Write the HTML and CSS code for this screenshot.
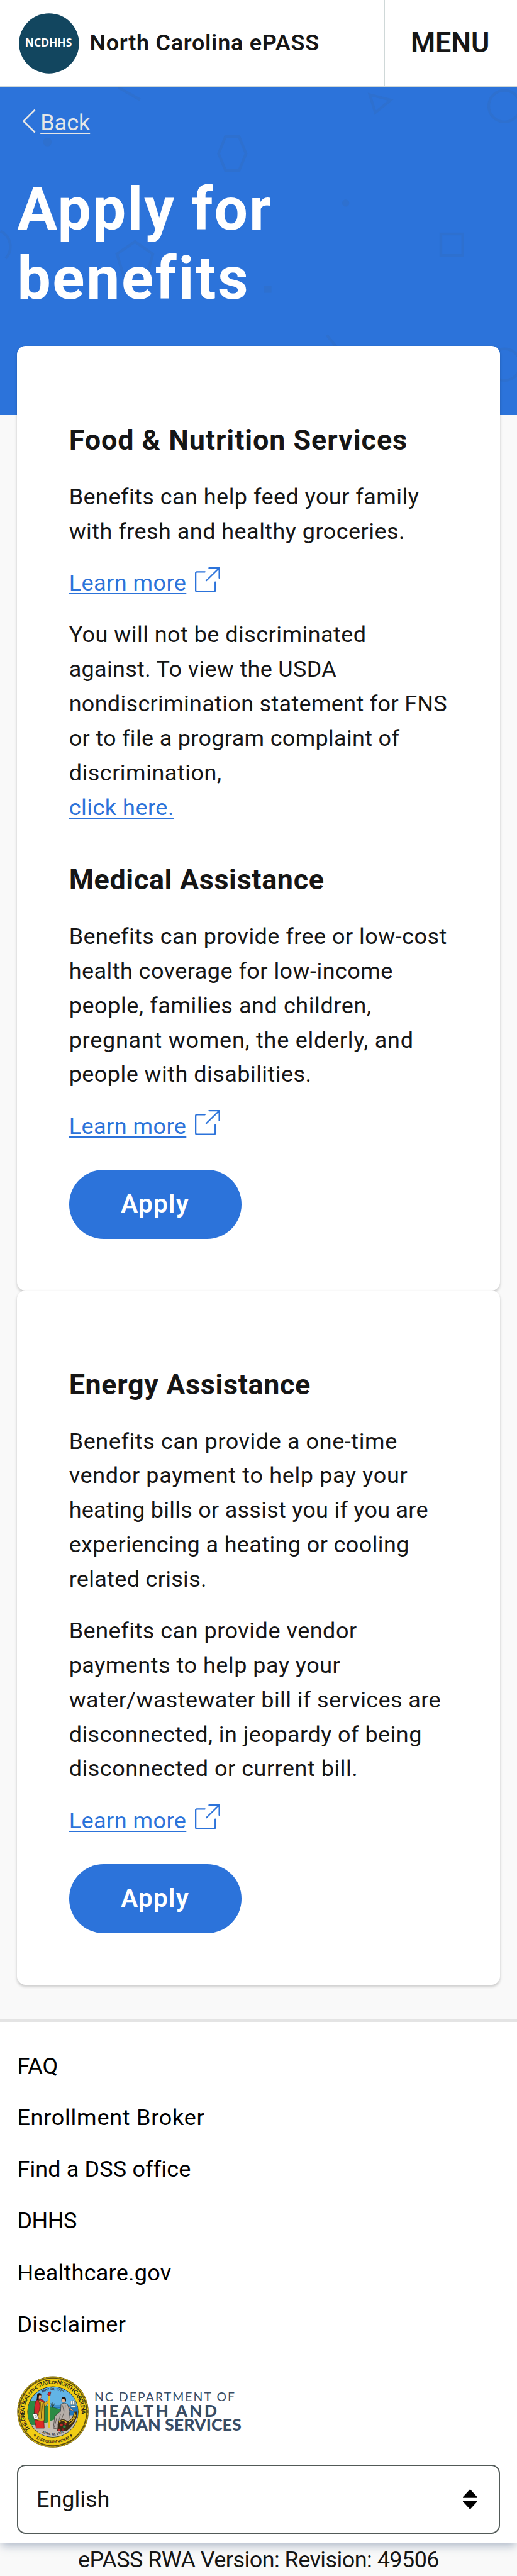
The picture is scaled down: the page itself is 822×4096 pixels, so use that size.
FILE: index.html
```html
<!DOCTYPE html>
<html lang="en">
<head>
<meta charset="utf-8">
<title>Apply for benefits - North Carolina ePASS</title>
<link rel="stylesheet" href="styles.css">
</head>
<body>
<svg class="defs" width="0" height="0" aria-hidden="true">
  <symbol id="external" viewBox="0 0 17.5 17.5">
    <path d="M6.9 3.2H1.3Q.5 3.2 .5 4V16Q.5 16.9 1.3 16.9H13.3Q14.1 16.9 14.1 16V10.3M9.8 .5H16.9V7.4M16.9 .5L7.9 9.3" fill="none" stroke="#2c73da" stroke-linecap="round"/>
  </symbol>
</svg>

<header class="topbar">
  <a class="brand">
    <svg class="brand-logo" viewBox="0 0 42 42"><circle cx="21" cy="21" r="20.9" fill="#12465f"/><text x="20.6" y="23.4" text-anchor="middle" textLength="32.6" lengthAdjust="spacingAndGlyphs">NCDHHS</text></svg>
    <span class="brand-name">North Carolina ePASS</span>
  </a>
  <button class="menu">MENU</button>
</header>

<section class="hero">
  <svg class="hero-shapes" viewBox="0 0 360 228" fill="none" stroke="#2e70cf" stroke-width="1.9">
    <path d="M82.5 0L97.5 8.5"/>
    <path d="M257.5 5L272 8.7L261.3 17.5Z"/>
    <circle cx="351.3" cy="13" r="11"/>
    <circle cx="33" cy="38" r="3" fill="#2e70cf" stroke="none"/>
    <path d="M157 34.2H166.5L171.3 46L166.5 57.8H157L152.2 46Z"/>
    <circle cx="240.7" cy="80.5" r="2.5" fill="#2e70cf" stroke="none"/>
    <path d="M.3 100A12 12 0 0 1 4 119"/>
    <path d="M94 107.3L106.4 116L102.3 131H86L81.4 116Z"/>
    <rect x="307" y="102" width="15.2" height="15"/>
    <rect x="184" y="138" width="5" height="5" fill="#2e70cf" stroke="none"/>
    <path d="M227.6 172.5L236 183"/>
    <circle cx="351.3" cy="193" r="11"/>
  </svg>
  <div class="hero-body">
    <a class="back"><svg class="chevron" viewBox="0 0 10 17"><path d="M9 .7L1.1 8.6L9 16.4" fill="none" stroke="#e6e6e6" stroke-width="1.15"/></svg><span class="back-label">Back</span></a>
    <h1 class="title"><span class="ls-20">Apply for</span><br><span class="ls-24">benefits</span></h1>
  </div>
</section>

<main class="cards">
  <article class="card">
    <h2 class="heading ls-20">Food &amp; Nutrition Services</h2>
    <p class="para"><span class="ls-12">Benefits can help feed your family</span><br><span class="ls-12">with fresh and healthy groceries.</span></p>
    <p class="para learn"><a class="link ls-12">Learn more</a><svg class="ext"><use href="#external"/></svg></p>
    <p class="para"><span class="ls-12">You will not be discriminated</span><br><span class="ls-8">against. To view the USDA</span><br><span class="ls-8">nondiscrimination statement for FNS</span><br><span class="ls-8">or to file a program complaint of</span><br><span class="ls-14">discrimination,</span><br><a class="link ls-14">click here.</a></p>
    <h2 class="heading second ls-14">Medical Assistance</h2>
    <p class="para"><span class="ls-12">Benefits can provide free or low-cost</span><br><span class="ls-12">health coverage for low-income</span><br><span class="ls-16">people, families and children,</span><br><span class="ls-20">pregnant women, the elderly, and</span><br><span class="ls-12">people with disabilities.</span></p>
    <p class="para learn"><a class="link ls-12">Learn more</a><svg class="ext"><use href="#external"/></svg></p>
    <button class="apply">Apply</button>
  </article>
  <article class="card">
    <h2 class="heading ls-14">Energy Assistance</h2>
    <p class="para"><span class="ls-16">Benefits can provide a one-time</span><br><span class="ls-18">vendor payment to help pay your</span><br><span class="ls-6">heating bills or assist you if you are</span><br><span class="ls-10">experiencing a heating or cooling</span><br><span class="ls-8">related crisis.</span></p>
    <p class="para"><span class="ls-14">Benefits can provide vendor</span><br><span class="ls-14">payments to help pay your</span><br><span class="ls-10">water/wastewater bill if services are</span><br><span class="ls-12">disconnected, in jeopardy of being</span><br><span class="ls-14">disconnected or current bill.</span></p>
    <p class="para learn"><a class="link ls-12">Learn more</a><svg class="ext"><use href="#external"/></svg></p>
    <button class="apply">Apply</button>
  </article>
</main>

<footer class="footer">
  <nav class="links">
    <a>FAQ</a>
    <a class="ls-20">Enrollment Broker</a>
    <a class="ls-4">Find a DSS office</a>
    <a class="tight">DHHS</a>
    <a class="ls-6">Healthcare.gov</a>
    <a class="ls-8">Disclaimer</a>
  </nav>
  <svg class="dept" viewBox="0 0 471 150">
    <defs>
      <path id="ring" d="M27.6 112A59.5 59.5 0 1 1 122.4 112"/>
      <path id="innerTop" d="M31 65A45 45 0 0 1 119 65"/>
      <path id="innerBottom" d="M36 105A49.5 49.5 0 0 0 114 105"/>
      <path id="motto" d="M22 113.5A66 66 0 0 0 128 113.5"/>
      <clipPath id="scene"><circle cx="75" cy="75" r="52.5"/></clipPath>
    </defs>
    <circle cx="75" cy="75" r="74.5" fill="#5a4c12"/>
    <circle cx="75" cy="75" r="72.8" fill="none" stroke="#dfc01c" stroke-width="2.6" stroke-dasharray="1.6 1.1"/>
    <circle cx="75" cy="75" r="70" fill="#f1cd14" stroke="#4a3f12" stroke-width=".8"/>
    <circle cx="75" cy="75" r="53.4" fill="#23241c"/>
    <g clip-path="url(#scene)">
      <rect x="20" y="20" width="110" height="110" fill="#62b4e6"/>
      <rect x="68" y="61" width="62" height="25" fill="#2579bd"/>
      <path d="M70 64H125M74 68H100M76 71H90" stroke="#62b4e6" stroke-width=".8"/>
      <path d="M20 55Q40 46 52 60Q75 65 91 70Q88 95 55 112H20Z" fill="#2c8a45" stroke="#174a26" stroke-width=".7"/>
      <path d="M20 103Q50 104 78 91L95 82H130V130H20Z" fill="#c4bdb4"/>
      <path d="M112 62H124L121 66H114ZM112 52h3v8h-3zM116 51h3v9h-3zM120 53h3v7h-3z" fill="#f4f4ee" stroke="#33403f" stroke-width=".6"/>
      <path d="M37 92L40 109H57L56 91Z" fill="#dd2926" stroke="#43100f" stroke-width=".8"/>
      <path d="M40 51Q36 60 36 83L43 92L52 84L57 52Q49 46 40 51Z" fill="#d3282b" stroke="#43100f" stroke-width=".8"/>
      <path d="M45 50L57 56V93Q48 96 38 90Q47 78 48 62Z" fill="#dcae26" stroke="#3b2e0b" stroke-width=".9"/>
      <path d="M56 57L66 50L68 53L58 65Z" fill="#dcae26" stroke="#3b2e0b" stroke-width=".7"/>
      <path d="M49 55L51 87M54 57L50 91M45 80L42 91" stroke="#3b2e0b" stroke-width=".8" fill="none"/>
      <ellipse cx="47" cy="42" rx="4" ry="5.3" fill="#e8b592" stroke="#2a1510" stroke-width=".5"/>
      <path d="M42 43Q41 34 49 36L51 40L46 40L45 50H41Z" fill="#201612"/>
      <path d="M33 79L41 78L46 89L36 91Z" fill="#fff" stroke="#222" stroke-width=".8"/>
      <path d="M36 83L41 82M37 86L43 85" stroke="#444" stroke-width=".7"/>
      <rect x="65.5" y="41" width="3" height="67" fill="#efc81a" stroke="#64520b" stroke-width=".5"/>
      <path d="M64 39Q65 32 71 33L69 42Z" fill="#cf2529" stroke="#43100f" stroke-width=".7"/>
      <path d="M74 66L71 57M74 66L75 55M74 66L79 57M72 65H89" stroke="#26342b" stroke-width="1.1"/>
      <path d="M76 109L79 84L91 74L92 59Q99 54 106 60L110 74L107 108L86 111Z" fill="#b6aea8" stroke="#302d2a" stroke-width=".9"/>
      <path d="M83 88L78 107M91 79L85 103M98 77L91 95M95 61L98 74M101 61L100 74" stroke="#45403c" stroke-width=".9" fill="none"/>
      <path d="M106 62L120 74L112 71Z" fill="#e8b592" stroke="#2a1510" stroke-width=".5"/>
      <ellipse cx="97" cy="50" rx="4" ry="5.5" fill="#e8b592" stroke="#2a1510" stroke-width=".5"/>
      <path d="M93 47Q95 42 101 45Q104 49 101 55L99 48Z" fill="#201612"/>
      <path d="M86 95Q95 87 105 94Q116 93 119 75L126 74Q127 96 104 115H84Z" fill="#3a2a14"/>
      <path d="M88 96Q97 89 104 98M108 96Q119 91 121 77M108 102Q119 96 123 81" stroke="#d7ae22" stroke-width="2" fill="none"/>
      <circle cx="93" cy="102" r="2.6" fill="#c8272b"/><circle cx="99" cy="106" r="2.8" fill="#2c8a45"/><circle cx="101" cy="100" r="2.3" fill="#c8272b"/><circle cx="88" cy="113" r="3" fill="#c8272b"/><circle cx="96" cy="112" r="2.5" fill="#8e1d22"/>
    </g>
    <g class="seal-text">
      <text font-size="12"><textPath href="#ring" textLength="229" lengthAdjust="spacing">THE GREAT SEAL <tspan font-size="8.5">OF THE</tspan> STATE <tspan font-size="8.5">OF</tspan> NORTH CAROLINA</textPath></text>
      <text font-size="7.2"><textPath href="#innerTop" startOffset="50%" text-anchor="middle">MAY 20, 1775</textPath></text>
      <text font-size="6.8"><textPath href="#innerBottom" startOffset="50%" text-anchor="middle">APRIL 12, 1776</textPath></text>
      <text font-size="8"><textPath href="#motto" startOffset="50%" text-anchor="middle">★ ESSE QUAM VIDERI ★</textPath></text>
    </g>
    <g class="dept-text">
      <text x="161.5" y="53" font-size="25.5" textLength="293">NC DEPARTMENT OF</text>
      <text class="strong" x="161.5" y="86" font-size="34.5" textLength="256">HEALTH AND</text>
      <text class="strong" x="161.5" y="114" font-size="34.5" textLength="307" lengthAdjust="spacingAndGlyphs">HUMAN SERVICES</text>
    </g>
  </svg>
  <div class="select"><span>English</span><svg class="arrows" viewBox="0 0 10 14"><path d="M5 0L10 5.4V6H0V5.4ZM0 8H10V8.6L5 14L0 8.6Z"/></svg></div>
</footer>
<p class="version">ePASS RWA Version: Revision: 49506</p>
</body>
</html>
```
FILE: styles.css
```css
html { zoom: 2.2842; background: #f9f9f9; }
body { margin: 0; font: 400 15.75px/24px Roboto, "Liberation Sans", sans-serif; color: #161616; }
h1, h2, p { margin: 0; }
button { border: 0; padding: 0; font: inherit; color: inherit; background: none; }
svg { display: block; flex: none; }
.defs { position: absolute; }

.ls-4 { letter-spacing: .004em; }
.ls-6 { letter-spacing: .0075em; }
.ls-8 { letter-spacing: .009em; }
.ls-10 { letter-spacing: .011em; }
.ls-12 { letter-spacing: .013em; }
.ls-14 { letter-spacing: .0145em; }
.ls-16 { letter-spacing: .0165em; }
.ls-18 { letter-spacing: .0185em; }
.ls-20 { letter-spacing: .021em; }
.ls-24 { letter-spacing: .028em; }
.tight { letter-spacing: -.012em; }

.topbar { display: flex; height: 60.1px; border-bottom: 1px solid #cfd8d8; background: #fff; }
.brand { flex: 1; display: flex; align-items: center; gap: 7.4px; padding-left: 13px; }
.brand-logo { width: 42px; height: 42px; }
.brand-logo text { font: 700 8px "Noto Sans", sans-serif; fill: #fff; }
.brand-name { font-weight: 600; letter-spacing: .02em; }
.menu { width: 93px; padding-right: 1px; box-sizing: border-box; border-left: 1px solid #cfd8d8; font-size: 19.6px; font-weight: 600; }

.hero { position: relative; height: 228px; background: #2c73da; overflow: hidden; }
.hero-shapes { position: absolute; inset: 0; width: 100%; height: 228px; }
.hero-body { position: relative; padding: 12.7px 12px 0; color: #fff; }
.back { display: flex; gap: 2.8px; padding-left: 3.3px; color: #e6e6e6; }
.chevron { width: 10px; height: 17px; margin-top: 2.1px; }
.back-label, .link { text-decoration: underline; text-decoration-thickness: 1px; text-underline-offset: 1.6px; text-decoration-skip-ink: none; }
.title { margin-top: 24.2px; font-size: 41.5px; line-height: 48px; font-weight: 700; }

.cards { position: relative; margin: -48px 12px 24px; }
.card { box-sizing: border-box; padding: 51.6px 36px 36px; border-radius: 6px; background: #fff; box-shadow: 0 1px 2px rgba(0, 0, 0, .2); }
.heading { margin-bottom: 13.5px; font-size: 19.65px; line-height: 28px; font-weight: 700; }
.heading.second { margin-top: 24.5px; }
.para { white-space: nowrap; }
.para + .para { margin-top: 12px; }
.learn { display: flex; gap: 5.8px; }
.link { color: #2c73da; }
.ext { width: 17.5px; height: 17.5px; margin-top: .8px; }
.apply { display: block; width: 120px; height: 48px; margin-top: 18.2px; border-radius: 24px; background: #2c73da; color: #fff; font-size: 17.7px; font-weight: 600; letter-spacing: .032em; }

.footer { padding: 18.8px 12px 6px; border-top: 2px solid #e4e4e4; background: #fff; box-shadow: 0 3px 6px -1px rgba(60, 85, 125, .4); clip-path: inset(0 0 -20px); }
.links { display: flex; flex-direction: column; gap: 12px; color: #000; }
.dept { width: 157px; height: 50px; margin: 23.7px 0 12px; }
.seal-text { font-family: Lato, sans-serif; font-weight: 700; fill: #26241a; }
.dept-text { font-family: Lato, sans-serif; fill: #384c64; }
.strong { font-weight: 900; }
.select { box-sizing: border-box; display: flex; align-items: center; justify-content: space-between; height: 48px; padding: 0 15px 0 12.5px; border: 1px solid #525a58; border-radius: 6px; }
.arrows { width: 10px; height: 14px; }
.version { height: 23.4px; text-align: center; letter-spacing: -.015em; position: relative; }
```
